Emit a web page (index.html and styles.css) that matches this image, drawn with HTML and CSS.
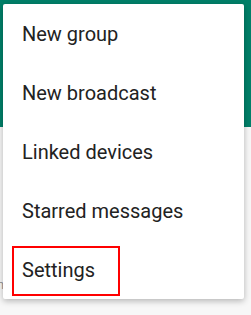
FILE: index.html
```html
<!DOCTYPE html>
<html lang="en">
<head>
  <meta charset="UTF-8">
  <meta name="viewport" content="width=device-width, initial-scale=1.0">
  <title>Menu</title>
  <link rel="stylesheet" href="styles.css">
</head>
<body>

  <div class="screen">
    <!-- App bar behind the menu -->
    <div class="app-bar"></div>

    <!-- Chat list peeking out on the left -->
    <div class="chat-list">
      <div class="chat-peek">
        <span class="chat-time">12:</span>
        <span class="chat-sub">n</span>
      </div>
    </div>

    <!-- Overflow menu -->
    <ul class="menu">
      <li class="menu-item">New group</li>
      <li class="menu-item">New broadcast</li>
      <li class="menu-item">Linked devices</li>
      <li class="menu-item">Starred messages</li>
      <li class="menu-item">
        Settings
        <span class="highlight"></span>
      </li>
    </ul>
  </div>

</body>
</html>
```

FILE: styles.css
```css
/* General Styles */
body {
  margin: 0;
  font-family: Roboto, "Liberation Sans", Arial, sans-serif;
  background-color: #f7f7f7;
}

.screen {
  position: relative;
  width: 251px;
  height: 315px;
  overflow: hidden;
}

/* App bar */
.app-bar {
  height: 127px;
  background: #008069;
}

/* Chat list */
.chat-list {
  height: 188px;
  background: #f7f7f7;
}

.chat-peek {
  display: flex;
  flex-direction: column;
  padding-top: 122px;
  margin-left: -22px;
  font-size: 15px;
  line-height: 24px;
}

.chat-time {
  color: #333;
}

.chat-sub {
  color: #999;
  margin-left: 19px;
  font-size: 13px;
}

/* Menu */
.menu {
  position: absolute;
  top: 4px;
  left: 3px;
  width: 241px;
  margin: 0;
  padding: 0;
  list-style: none;
  background: #ffffff;
  border-radius: 2px;
  box-shadow: 0 2px 6px rgba(0, 0, 0, 0.28);
}

.menu-item {
  position: relative;
  display: flex;
  align-items: center;
  height: 59px;
  padding-left: 19px;
  font-size: 20px;
  color: #222222;
}

/* Red annotation box */
.highlight {
  position: absolute;
  top: 6px;
  left: 9px;
  width: 104px;
  height: 46px;
  border: 2px solid #ff0000;
}
```
